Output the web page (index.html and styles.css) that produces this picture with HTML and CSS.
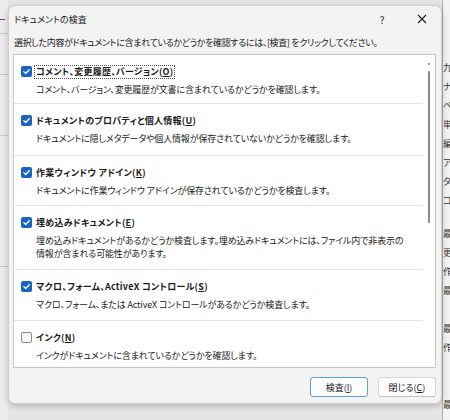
FILE: index.html
```html
<!DOCTYPE html>
<html lang="ja">
<head>
<meta charset="utf-8">
<link rel="stylesheet" href="styles.css">
</head>
<body>
<div class="page">
  <div class="bg-left">
    <div class="bl-dash"></div>
    <div class="bl-line l1"></div>
    <div class="bl-line l2"></div>
    <div class="bl-line l3"></div>
    <div class="bl-line l4"></div>
  </div>
  <div class="dialog">
    <div class="titlebar">
      <span class="title">ドキュメントの検査</span>
      <span class="help">?</span>
      <svg class="close" width="10" height="10" viewBox="0 0 10 10"><path d="M1 1L9 9M9 1L1 9" stroke="#1b1b1b" stroke-width="1.1" fill="none"/></svg>
    </div>
    <div class="intro">選択した内容がドキュメントに含まれているかどうかを確認するには、[検査] をクリックしてください。</div>
    <div class="listbox">
      <div class="items">
        <div class="item i1">
          <div class="head">
            <span class="cb on"><svg width="11" height="11" viewBox="0 0 11 11"><path d="M2.8 5.6L4.7 7.5L8.3 3.7" stroke="#fff" stroke-width="1.3" fill="none" stroke-linecap="round" stroke-linejoin="round"/></svg></span>
            <span class="label focus">コメント、変更履歴、バージョン(<u>O</u>)</span>
          </div>
          <div class="desc">コメント、バージョン、変更履歴が文書に含まれているかどうかを確認します。</div>
        </div>
        <div class="item i2">
          <div class="head">
            <span class="cb on"><svg width="11" height="11" viewBox="0 0 11 11"><path d="M2.8 5.6L4.7 7.5L8.3 3.7" stroke="#fff" stroke-width="1.3" fill="none" stroke-linecap="round" stroke-linejoin="round"/></svg></span>
            <span class="label">ドキュメントのプロパティと個人情報(<u>U</u>)</span>
          </div>
          <div class="desc">ドキュメントに隠しメタデータや個人情報が保存されていないかどうかを確認します。</div>
        </div>
        <div class="item i3">
          <div class="head">
            <span class="cb on"><svg width="11" height="11" viewBox="0 0 11 11"><path d="M2.8 5.6L4.7 7.5L8.3 3.7" stroke="#fff" stroke-width="1.3" fill="none" stroke-linecap="round" stroke-linejoin="round"/></svg></span>
            <span class="label">作業ウィンドウ アドイン(<u>K</u>)</span>
          </div>
          <div class="desc">ドキュメントに作業ウィンドウ アドインが保存されているかどうかを検査します。</div>
        </div>
        <div class="item i4">
          <div class="head">
            <span class="cb on"><svg width="11" height="11" viewBox="0 0 11 11"><path d="M2.8 5.6L4.7 7.5L8.3 3.7" stroke="#fff" stroke-width="1.3" fill="none" stroke-linecap="round" stroke-linejoin="round"/></svg></span>
            <span class="label">埋め込みドキュメント(<u>E</u>)</span>
          </div>
          <div class="desc">埋め込みドキュメントがあるかどうか検査します。埋め込みドキュメントには、ファイル内で非表示の<br>情報が含まれる可能性があります。</div>
        </div>
        <div class="item i5">
          <div class="head">
            <span class="cb on"><svg width="11" height="11" viewBox="0 0 11 11"><path d="M2.8 5.6L4.7 7.5L8.3 3.7" stroke="#fff" stroke-width="1.3" fill="none" stroke-linecap="round" stroke-linejoin="round"/></svg></span>
            <span class="label">マクロ、フォーム、ActiveX コントロール(<u>S</u>)</span>
          </div>
          <div class="desc">マクロ、フォーム、または ActiveX コントロールがあるかどうか検査します。</div>
        </div>
        <div class="item i6 last">
          <div class="head">
            <span class="cb off"></span>
            <span class="label">インク(<u>N</u>)</span>
          </div>
          <div class="desc">インクがドキュメントに含まれているかどうかを確認します。</div>
        </div>
      </div>
      <div class="scroll">
        <div class="arrow"></div>
        <div class="thumb"></div>
      </div>
    </div>
    <div class="buttons">
      <button class="btn default">検査(<u>I</u>)</button>
      <button class="btn">閉じる(<u>C</u>)</button>
    </div>
  </div>
  <div class="bg-right">
    <div class="frag">九</div>
    <div class="frag">ナ</div>
    <div class="frag">ペ</div>
    <div class="frag">単</div>
    <div class="frag">編</div>
    <div class="frag">アイ</div>
    <div class="frag">タグ</div>
    <div class="frag">コメ</div>
    <div class="frag gap">最</div>
    <div class="frag">更</div>
    <div class="frag">作</div>
    <div class="frag">最</div>
    <div class="frag gap2">最</div>
    <div class="frag">作</div>
    <div class="frag gap3">最</div>
  </div>
</div>
</body>
</html>
```

FILE: styles.css
```css
* { box-sizing: border-box; }
html, body { margin: 0; padding: 0; }
body {
  width: 450px;
  height: 420px;
  overflow: hidden;
  background: #e5e5e5;
  font-family: "Noto Sans CJK JP", "Noto Sans", sans-serif;
  font-size: 9px;
  color: #1b1b1b;
  font-feature-settings: "palt";
}
.page {
  display: flex;
  height: 420px;
}
.bg-left {
  width: 8px;
  flex: none;
  display: flex;
  flex-direction: column;
  background: #ececec;
}
.bl-dash { width: 5px; height: 1px; background: #555; margin-top: 19px; }
.bl-line { height: 1px; background: #c8c8c8; }
.bl-line.l1 { margin-top: 13px; }
.bl-line.l2 { margin-top: 40px; }
.bl-line.l3 { margin-top: 60px; }
.bl-line.l4 { margin-top: 130px; }

.dialog {
  width: 434px;
  flex: none;
  height: 399px;
  margin-top: 5px;
  background: #f3f3f3;
  border: 1px solid #cfcfcf;
  border-radius: 7px;
  box-shadow: 0 2px 6px rgba(0,0,0,0.22);
  display: flex;
  flex-direction: column;
  position: relative;
  z-index: 1;
}
.titlebar {
  height: 26px;
  display: flex;
  align-items: center;
  padding: 0 0 0 5px;
}
.title { flex: 1; font-size: 9px; }
.help { width: 12px; text-align: center; font-size: 10px; margin-right: 29px; }
.close { margin-right: 14px; }
.intro {
  padding-left: 5px;
  height: 22px;
  line-height: 22px;
  white-space: nowrap;
  letter-spacing: -0.36px;
}
.listbox {
  margin: 0 5px 0 4px;
  height: 314px;
  background: #fff;
  border: 1px solid #c9c9c9;
  display: flex;
}
.items { flex: 1; }
.item {
  padding: 8px 0 0 7px;
  border-bottom: 1px solid #e6e6e6;
}
.i1 { height: 49px; }
.i2 { height: 52px; }
.i3 { height: 50px; }
.i4 { height: 64px; }
.i5 { height: 51px; }
.item.last { border-bottom: none; }
.head {
  display: flex;
  align-items: center;
  height: 17px;
}
.cb {
  width: 11px;
  height: 11px;
  border-radius: 2px;
  margin-right: 4px;
  display: flex;
  flex: none;
}
.cb.on { background: #1c63c0; }
.cb.off { background: #f6f6f6; border: 1px solid #8c8c8c; }
.label {
  font-weight: bold;
  padding: 0 1px;
  border: 1px dotted transparent;
  line-height: 12px;
  margin-left: -2px;
  letter-spacing: 0.25px;
}
.label.focus { border-color: #555; }
.desc {
  margin-top: 3px;
  padding-left: 15px;
  line-height: 13px;
  color: #222;
  white-space: nowrap;
  letter-spacing: -0.15px;
}
.scroll {
  width: 12px;
  flex: none;
  display: flex;
  flex-direction: column;
  align-items: center;
}
.arrow { width: 2px; height: 2px; background: #9a9a9a; margin-top: 8px; }
.thumb { width: 2px; height: 152px; background: #8a8a8a; margin-top: 6px; border-radius: 1px; }
.buttons {
  display: flex;
  justify-content: flex-end;
  gap: 10px;
  padding: 9px 5px 0 0;
}
.btn {
  font-family: inherit;
  font-size: 9px;
  font-feature-settings: "palt";
  color: #1b1b1b;
  width: 58px;
  height: 20px;
  padding: 0;
  background: #fdfdfd;
  border: 1px solid #d6d6d6;
  border-bottom-color: #c2c2c2;
  border-radius: 3px;
}
.btn.default { border: 1.5px solid #5f9de0; }
.bg-right {
  flex: 1;
  overflow: hidden;
  background: #f2f2f2;
  border-left: 1px solid #b0b0b0;
  display: flex;
  flex-direction: column;
  padding-top: 58px;
  white-space: nowrap;
}
.frag { font-size: 9px; line-height: 19px; color: #333; }
.frag.gap { margin-top: 14px; }
.frag.gap2 { margin-top: 19px; }
.frag.gap3 { margin-top: 38px; }
```
